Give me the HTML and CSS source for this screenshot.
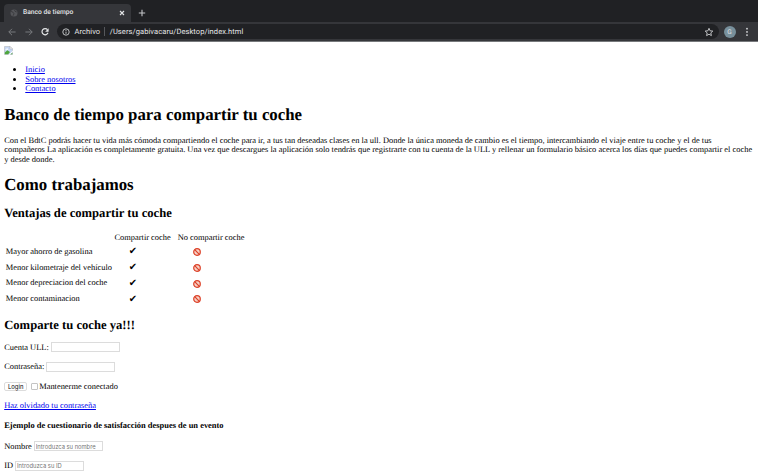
FILE: index.html
```html
<!DOCTYPE html>
<html lang="es">
<head>
<meta charset="utf-8">
<title>Banco de tiempo</title>
<link rel="stylesheet" href="styles.css">
</head>
<body>
<svg class="defs" width="0" height="0">
  <symbol id="no" viewBox="0 0 8 8"><circle cx="4" cy="4" r="3.3" fill="#f7cfc4" stroke="#dc4027" stroke-width="1.2"/><path d="M1.7 1.7l4.6 4.6" stroke="#dc4027" stroke-width="1.2"/></symbol>
</svg>
<header class="browser">
  <div class="tabs">
    <div class="tab">
      <svg class="globe" viewBox="0 0 8 8"><circle cx="4" cy="4" r="3.5" fill="#55565a"/><path d="M1 2.4l2 .8 1 1.6-1 2M4.6 1l.4 1.4 1.8.6" fill="none" stroke="#303134" stroke-width=".7"/></svg>
      <span class="tab-title">Banco de tiempo</span>
      <svg class="close" viewBox="0 0 6 6"><path d="M1 1l4 4M5 1L1 5" stroke="#e4e5e7" stroke-width="1.1"/></svg>
    </div>
    <svg class="plus" viewBox="0 0 8 8"><path d="M4 .8v6.4M.8 4h6.4" stroke="#c3c5c8" stroke-width="1.1"/></svg>
  </div>
  <div class="toolbar">
    <svg class="nav" viewBox="0 0 10 10"><path d="M8.6 5H1.8M5 1.8L1.8 5 5 8.2" fill="none" stroke="#77797c" stroke-width="1"/></svg>
    <svg class="nav" viewBox="0 0 10 10"><path d="M1.4 5h6.8M5 1.8L8.2 5 5 8.2" fill="none" stroke="#77797c" stroke-width="1"/></svg>
    <svg class="nav" viewBox="0 0 10 10"><path d="M7.5 2.7A3.1 3.1 0 1 0 8 5.8" fill="none" stroke="#e4e5e7" stroke-width="1.2"/><path d="M8.6 1.2v3.5H5.1z" fill="#e4e5e7"/></svg>
    <div class="address">
      <svg class="info" viewBox="0 0 8 8"><circle cx="4" cy="4" r="3.2" fill="none" stroke="#d0d2d5" stroke-width=".9"/><path d="M4 3.6v2.2M4 2.1v.9" stroke="#d0d2d5" stroke-width=".9"/></svg>
      <span class="scheme">Archivo</span>
      <span class="url">/Users/gabivacaru/Desktop/index.html</span>
      <svg class="star" viewBox="0 0 10 10"><path d="M5 1.3l1.1 2.5 2.7.3-2 1.8.6 2.7L5 7.2 2.6 8.6l.6-2.7-2-1.8 2.7-.3z" fill="none" stroke="#ced0d3" stroke-width=".9"/></svg>
    </div>
    <span class="avatar">G</span>
    <svg class="dots" viewBox="0 0 4 10"><g fill="#d5d7da"><circle cx="2" cy="1.7" r=".9"/><circle cx="2" cy="4.9" r=".9"/><circle cx="2" cy="8.1" r=".9"/></g></svg>
  </div>
</header>
<main>
  <svg class="broken" viewBox="0 0 9 9"><path d="M.5.5H6l2.5 2.5v5.5h-8z" fill="#c5d6f3" stroke="#b5b8bc" stroke-width=".6"/><path d="M6 .5V3h2.5z" fill="#fff" stroke="#9da0a5" stroke-width=".4"/><path d="M1.4 3.8q0-1 1-1 .4-.9 1.2-.4.8.2.6 1.4z" fill="#fff"/><path d="M.8 8.2V6.6l2.6-2.4L6 6.1 4.2 8.2z" fill="#4ea63c"/><path d="M4.4 9L9 4.6v1.1L5.6 9z" fill="#fff"/><path d="M6.6 8.2l1.7-1.5v1.5z" fill="#4ea63c"/></svg>
  <ul>
    <li><a href="#">Inicio</a></li>
    <li><a href="#">Sobre nosotros</a></li>
    <li><a href="#">Contacto</a></li>
  </ul>
  <h1>Banco de tiempo para compartir tu coche</h1>
  <p class="intro">Con el BdtC podrás hacer tu vida más cómoda compartiendo el coche para ir, a tus tan deseadas clases en la ull. Donde la única moneda de cambio es el tiempo, intercambiando el viaje entre tu coche y el de tus<br>compañeros La aplicación es completamente gratuita. Una vez que descargues la aplicación solo tendrás que registrarte con tu cuenta de la ULL y rellenar un formulario básico acerca los días que puedes compartir el coche<br>y desde donde.</p>
  <h1>Como trabajamos</h1>
  <h2>Ventajas de compartir tu coche</h2>
  <table>
    <tr><td class="label"></td><td class="share">Compartir coche</td><td class="solo">No compartir coche</td></tr>
    <tr class="row"><td>Mayor ahorro de gasolina</td><td class="yes">✔</td><td class="no"><svg><use href="#no"/></svg></td></tr>
    <tr class="row"><td>Menor kilometraje del vehículo</td><td class="yes">✔</td><td class="no"><svg><use href="#no"/></svg></td></tr>
    <tr class="row"><td>Menor depreciacion del coche</td><td class="yes">✔</td><td class="no"><svg><use href="#no"/></svg></td></tr>
    <tr class="row"><td>Menor contaminacion</td><td class="yes">✔</td><td class="no"><svg><use href="#no"/></svg></td></tr>
  </table>
  <h2>Comparte tu coche ya!!!</h2>
  <form>
    <div class="field"><label for="user">Cuenta ULL:</label><input id="user" type="text"></div>
    <div class="field"><label for="pass">Contraseña:</label><input id="pass" type="password"></div>
    <div class="field"><button type="button">Login</button><input id="keep" class="check" type="checkbox"><label for="keep">Mantenerme conectado</label></div>
    <p class="forgot"><a href="#">Haz olvidado tu contraseña</a></p>
  </form>
  <h4>Ejemplo de cuestionario de satisfacción despues de un evento</h4>
  <form>
    <div class="field"><label for="name">Nombre</label><input id="name" type="text" placeholder="Introduzca su nombre"></div>
    <div class="field"><label for="id">ID</label><input id="id" type="text" placeholder="Introduzca su ID"></div>
  </form>
</main>
</body>
</html>
```
FILE: styles.css
```css
* { box-sizing: border-box; }
html, body { height: 474px; overflow: hidden; }
body {
  margin: 0;
  background: #fff;
  color: #000;
  font: 8.42px/9.47px "Liberation Serif", serif;
  text-rendering: geometricPrecision;
}
svg { display: block; flex: none; }
.defs { position: absolute; }

.browser {
  height: 42px;
  background: #202124;
  border-bottom: 1px solid #77797c;
  font-family: Roboto, sans-serif;
  color: #e4e5e7;
}
.tabs { display: flex; height: 22px; padding: 4px 0 0 4px; }
.tab {
  display: flex;
  align-items: center;
  width: 127px;
  height: 18px;
  padding: 0 6px 0 6px;
  border-radius: 4px 4px 0 0;
  background: #35363a;
}
.globe { width: 8px; height: 8px; }
.tab-title { margin-left: 5px; font-size: 6.7px; font-weight: 500; }
.close { width: 6px; height: 6px; margin-left: auto; }
.plus { width: 8px; height: 8px; margin: 5px 0 0 7px; }
.toolbar {
  display: flex;
  align-items: center;
  height: 19px;
  padding: 0 9.5px 0 7px;
  background: #35363a;
}
.nav { width: 10px; height: 10px; margin-right: 7px; }
.nav + .nav + .nav { margin-left: -1px; margin-right: 8px; }
.address {
  display: flex;
  align-items: center;
  flex: 1;
  height: 15px;
  margin-left: -1px;
  padding: 0 5px;
  border-radius: 8px;
  background: #202124;
  font-size: 7.5px;
  letter-spacing: .09px;
}
.info { width: 8px; height: 8px; }
.scheme { margin-left: 4.5px; padding-right: 4px; border-right: 1px solid #55575b; }
.url { margin-left: 4.5px; }
.star { width: 10px; height: 10px; margin-left: auto; }
.avatar {
  width: 12px;
  height: 12px;
  margin-left: 5px;
  border-radius: 50%;
  background: #78909c;
  font-size: 6.5px;
  line-height: 12px;
  text-align: center;
}
.dots { width: 4px; height: 10px; margin-left: 9px; }

main { padding: 4px 4.2px 0; }
.broken { width: 9px; height: 9px; }
ul { margin: 10.2px 0 11.3px; padding-left: 21.1px; }
a { color: #0000ee; }
h1 { margin: 11.3px 0; font-size: 16.84px; line-height: 19.5px; }
.intro { margin: 0; white-space: nowrap; letter-spacing: .008px; }
h2 { margin: 10.5px 0; font-size: 12.63px; line-height: 14.2px; }

table { border-spacing: 0; table-layout: fixed; width: 242px; margin-top: 11.5px; }
td { height: 11.6px; padding: 0 0 0 1.6px; white-space: nowrap; }
.label { width: 108.7px; }
.share { width: 63.2px; }
.row td { height: 15.85px; }
.row .yes { padding: 2px 0 0 15.8px; font: 10px/10px "DejaVu Sans", sans-serif; }
.row .no { padding-left: 16.5px; }
.no svg { width: 8px; height: 8px; margin-top: 1px; }
table + h2 { margin: 11.2px 0 9.5px; }

.field { display: flex; align-items: center; height: 11px; margin-bottom: 8.5px; }
.forgot { margin: -.6px 0 0; line-height: 11px; }
input {
  width: 69px;
  height: 10px;
  margin: 0 0 0 2px;
  padding: 0 1px;
  border: 1px solid #dcdcdc;
  background: #fff;
  font: 5.8px/8px Inter, sans-serif;
}
input::placeholder { color: #757575; }
.check { appearance: none; width: 7px; height: 7px; margin: 0 1px 0 4px; border-color: #c4c4c4; border-radius: 1px; }
button {
  width: 23px;
  height: 9px;
  padding: 0;
  border: 1px solid #dcdcdc;
  border-radius: 2px;
  background: #fff;
  font: 5.9px/7px Inter, sans-serif;
}
h4 { margin: 10.4px 0 10.3px; font-size: 8.45px; line-height: 9.5px; }
```
